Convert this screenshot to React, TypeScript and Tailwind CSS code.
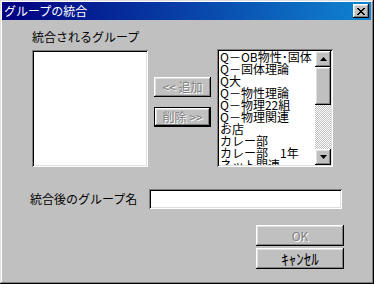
import React from "react";

const raised =
  "shadow-[inset_-1px_-1px_0_#000,inset_1px_1px_0_#fff,inset_-2px_-2px_0_#808080,inset_2px_2px_0_#dfdfdf]";
const sunken =
  "shadow-[inset_1px_1px_0_#808080,inset_-1px_-1px_0_#fff,inset_2px_2px_0_#000,inset_-2px_-2px_0_#dfdfdf]";
const disabledText = "text-[#808080] [text-shadow:1px_1px_0_#fff]";

const items = [
  "Q－OB物性･固体",
  "Q－固体理論",
  "Q大",
  "Q－物理性理論".replace("物理性", "物性"),
  "Q－物理22組",
  "Q－物理関連",
  "お店",
  "カレー部",
  "カレー部　1年",
  "ネット関連",
];

function Arrow({ up }: { up?: boolean }) {
  return (
    <svg width="7" height="4" viewBox="0 0 7 4" className="block">
      {up ? (
        <path d="M3.5 0 L7 4 L0 4 Z" fill="#000" />
      ) : (
        <path d="M0 0 L7 0 L3.5 4 Z" fill="#000" />
      )}
    </svg>
  );
}

export default function App() {
  return (
    <div
      className={`w-[374px] h-[284px] bg-[#c0c0c0] pl-[2px] pt-[2px] pr-[3px] flex flex-col font-['Noto_Sans_CJK_JP',sans-serif] text-[12px] text-black shadow-[inset_-1px_-1px_0_#000,inset_1px_1px_0_#dfdfdf,inset_-2px_-2px_0_#808080,inset_2px_2px_0_#fff]`}
    >
      {/* title bar */}
      <div className="h-[18px] flex items-center justify-between bg-[linear-gradient(90deg,#000080,#1084d0)] pl-[2px] pr-[2px]">
        <span className="text-white text-[12px] leading-[12px] whitespace-nowrap">
          グループの統合
        </span>
        <div
          className={`w-[16px] h-[14px] bg-[#c0c0c0] flex items-center justify-center ${raised}`}
        >
          <svg width="8" height="7" viewBox="0 0 8 7" className="block">
            <path
              d="M0 0h2v1h1v1h2V1h1V0h2v1H7v1H6v1H5v1h1v1h1v1h1v1H6V6H5V5H3v1H2v1H0V6h1V5h1V4h1V3H2V2H1V1H0z"
              fill="#000"
            />
          </svg>
        </div>
      </div>

      {/* top row */}
      <div className="flex items-start pl-[30px] pt-[11px]">
        <div className="w-[116px] flex flex-col">
          <div className="h-[19px] leading-[12px] whitespace-nowrap">統合されるグループ</div>
          <div className={`h-[117px] bg-white ${sunken}`} />
        </div>
        <div className="ml-[6px] w-[57px] pt-[46px] flex flex-col gap-[10px]">
          <div
            className={`h-[20px] bg-[#c0c0c0] flex items-center justify-center leading-[12px] whitespace-nowrap ${raised} ${disabledText}`}
          >
            &lt;&lt; 追加
          </div>
          <div className="h-[20px] border border-black">
            <div
              className={`h-full bg-[#c0c0c0] flex items-center justify-center leading-[12px] whitespace-nowrap ${raised} ${disabledText}`}
            >
              削除 &gt;&gt;
            </div>
          </div>
        </div>
        <div
          className={`ml-[6px] mt-[18px] w-[116px] h-[118px] bg-white p-[2px] flex ${sunken}`}
        >
          <div className="flex-1 overflow-hidden pt-[0px]">
            {items.map((t) => (
              <div key={t} className="h-[12px] leading-[12px] whitespace-nowrap pl-[1px]">
                {t}
              </div>
            ))}
          </div>
          <div className="w-[16px] flex flex-col">
            <div
              className={`h-[16px] bg-[#c0c0c0] flex items-center justify-center ${raised}`}
            >
              <Arrow up />
            </div>
            <div className={`h-[38px] bg-[#c0c0c0] ${raised}`} />
            <div className="flex-1 bg-[repeating-conic-gradient(#c0c0c0_0_25%,#fff_0_50%)] bg-[length:2px_2px]" />
            <div
              className={`h-[16px] bg-[#c0c0c0] flex items-center justify-center ${raised}`}
            >
              <Arrow />
            </div>
          </div>
        </div>
      </div>

      {/* name row */}
      <div className="flex items-center mt-[22px] pl-[28px]">
        <div className="w-[119px] leading-[12px] whitespace-nowrap">統合後のグループ名</div>
        <div className={`w-[193px] h-[20px] bg-white ${sunken}`} />
      </div>

      {/* buttons */}
      <div className="flex flex-col gap-[2px] mt-[16px] pl-[254px]">
        <div
          className={`w-[88px] h-[21px] bg-[#c0c0c0] flex items-center justify-center leading-[12px] ${raised} ${disabledText}`}
        >
          OK
        </div>
        <div
          className={`w-[88px] h-[21px] bg-[#c0c0c0] flex items-center justify-center text-[15px] leading-[15px] ${raised}`}
        >
          ｷｬﾝｾﾙ
        </div>
      </div>
    </div>
  );
}
